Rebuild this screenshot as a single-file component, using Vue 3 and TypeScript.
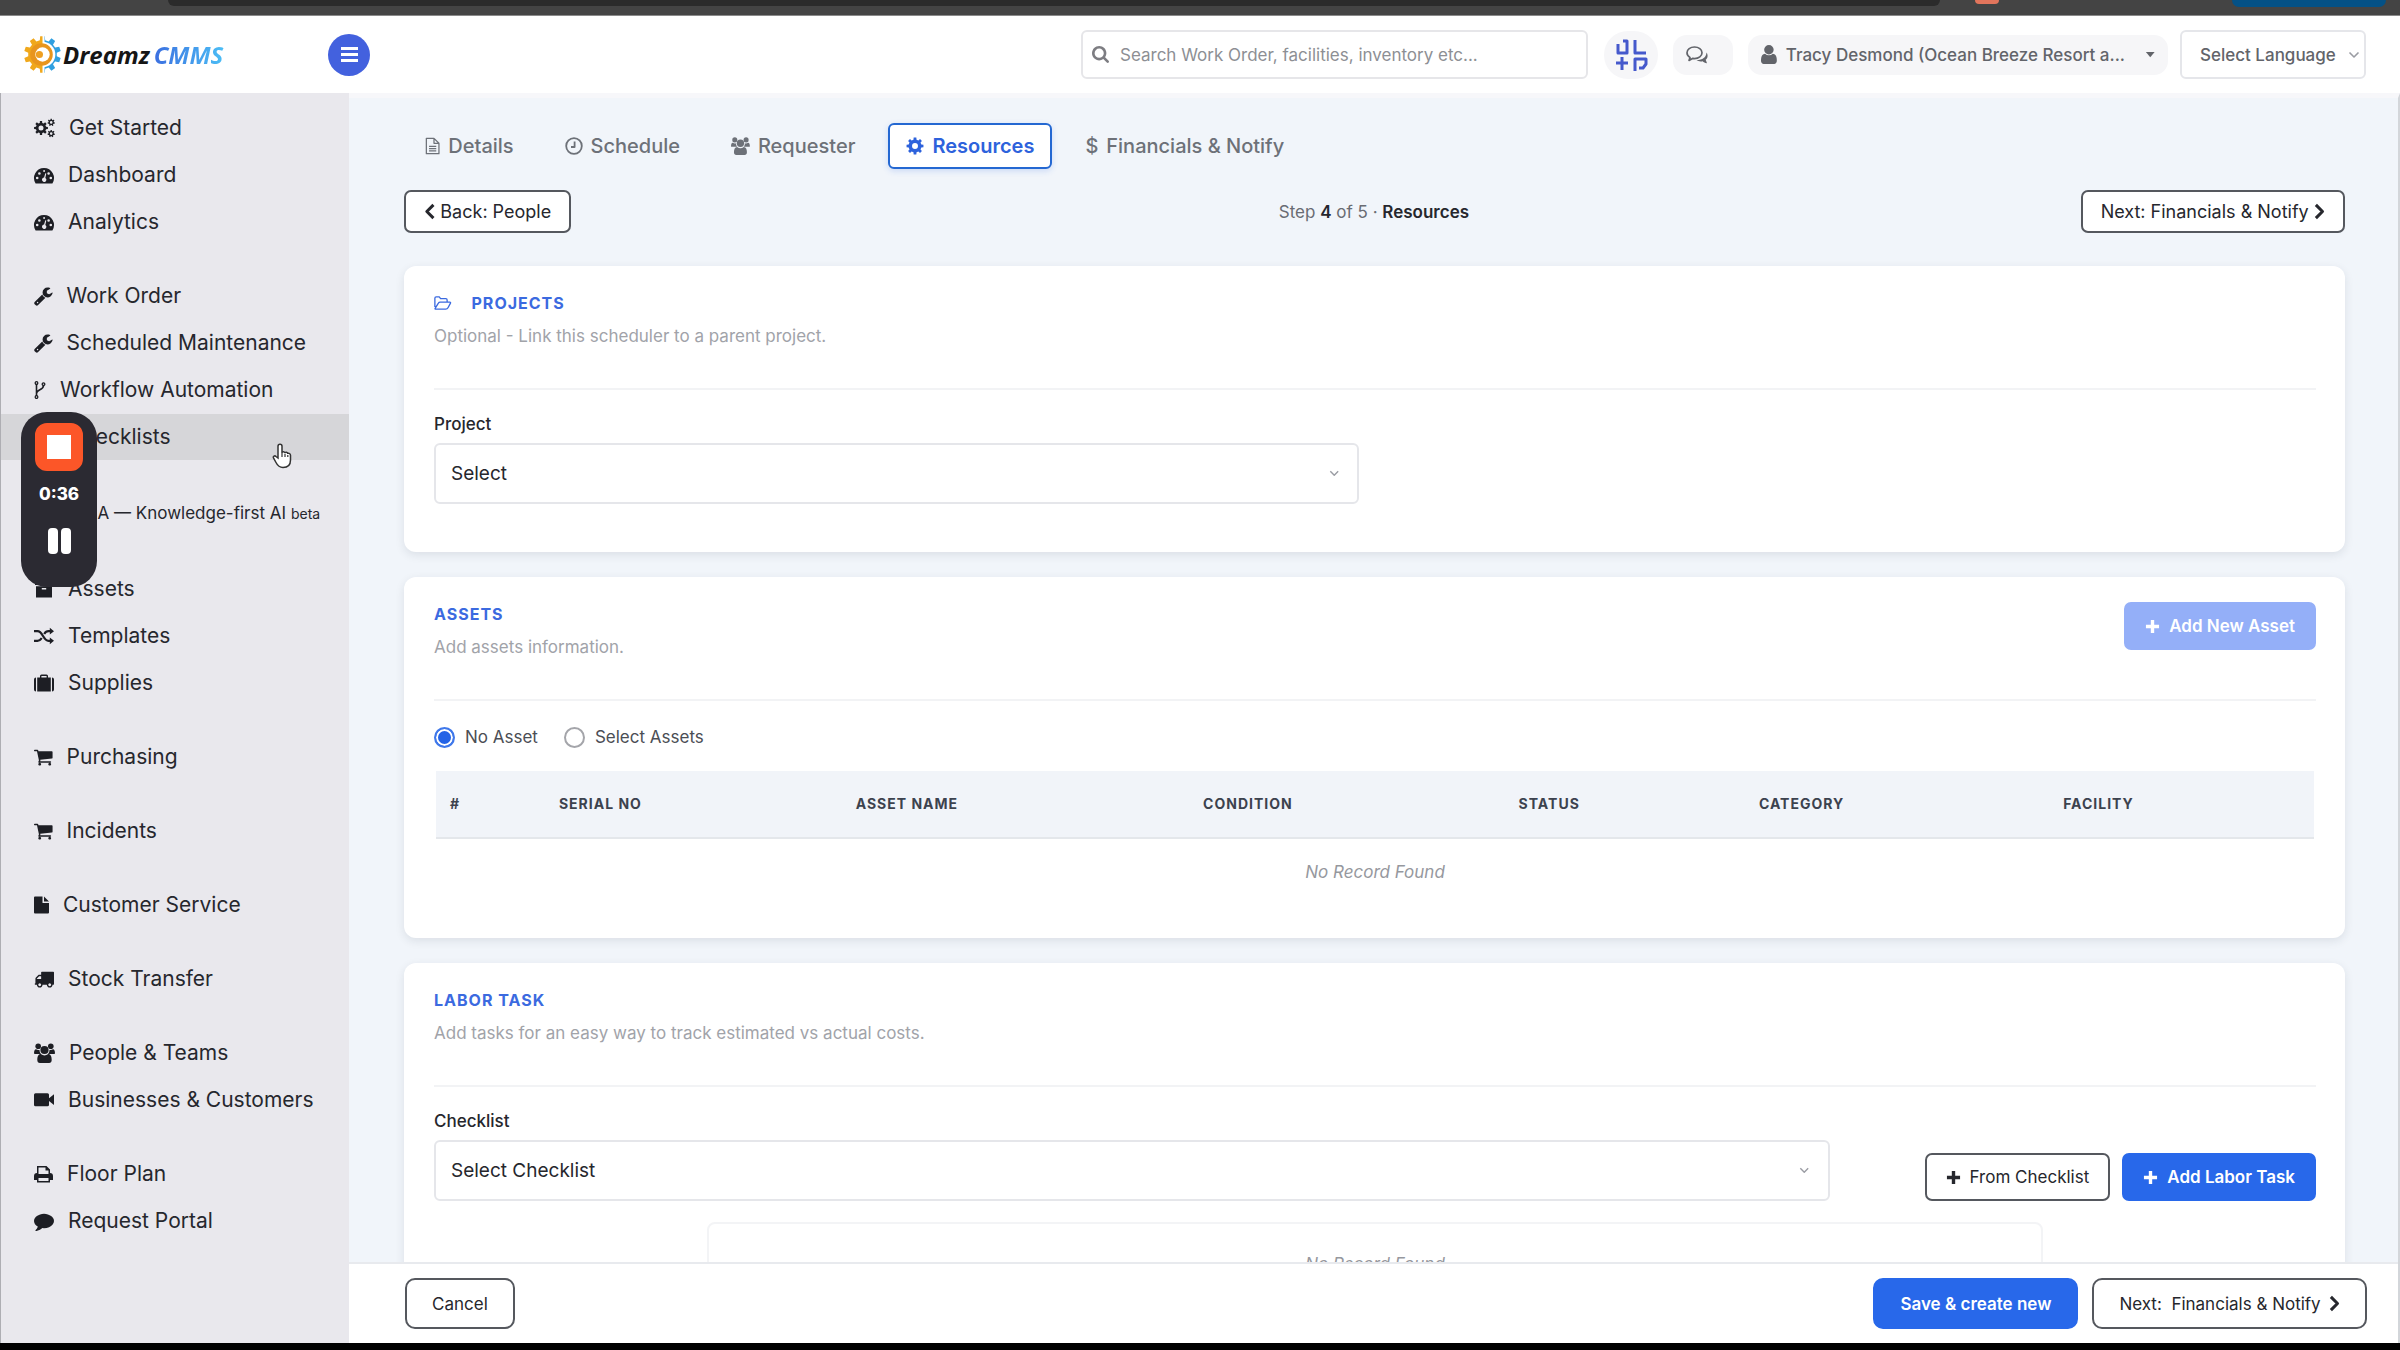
<script setup lang="ts">
import { h, ref } from 'vue'

type IconDef = [box: string, body: string]

/** Outline of a toothed wheel with a round hole in the middle. */
function gear(cx: number, cy: number, outer: number, inner: number, teeth: number, hole: number): string {
  const points: string[] = []
  const step = (Math.PI * 2) / teeth
  for (let i = 0; i < teeth; i++) {
    const a = i * step - Math.PI / 2
    const corners: [number, number][] = [
      [a - step * 0.3, inner],
      [a - step * 0.2, outer],
      [a + step * 0.2, outer],
      [a + step * 0.3, inner],
    ]
    for (const [t, r] of corners) {
      points.push(`${(cx + r * Math.cos(t)).toFixed(2)} ${(cy + r * Math.sin(t)).toFixed(2)}`)
    }
  }
  const ring = hole
    ? `M${cx - hole} ${cy}a${hole} ${hole} 0 1 0 ${hole * 2} 0a${hole} ${hole} 0 1 0 ${-hole * 2} 0z`
    : ''
  return `M${points.join('L')}z${ring}`
}

const p = (d: string) => `<path fill-rule="evenodd" d="${d}"/>`
const line = (d: string, w: number) =>
  `<path fill="none" stroke="currentColor" stroke-width="${w}" stroke-linejoin="round" d="${d}"/>`

const icons: Record<string, IconDef> = {
  cogs: ['0 0 21 20', p(gear(7, 10, 7, 5.2, 8, 2.5)) + p(gear(17.2, 4.4, 3.7, 2.7, 7, 1.3)) + p(gear(17.2, 15.6, 3.7, 2.7, 7, 1.3))],
  gauge: ['0 0 20 20', p('M10 3A10 10 0 0 0 1.6 18.4H18.4A10 10 0 0 0 10 3zM3.2 11.7a1.3 1.3 0 1 1 0 2.6a1.3 1.3 0 1 1 0-2.6zM5.4 7.2a1.3 1.3 0 1 1 0 2.6a1.3 1.3 0 1 1 0-2.6zM14.6 7.2a1.3 1.3 0 1 1 0 2.6a1.3 1.3 0 1 1 0-2.6zM16.8 11.7a1.3 1.3 0 1 1 0 2.6a1.3 1.3 0 1 1 0-2.6zM9.4 5h1.4v2h-1.4zM11.3 8.2l1 .3-1 4.4a2.2 2.2 0 1 1-1.2-.3z')],
  wrench: ['64 0 1664 1792', p('M448 1472q0-26-19-45t-45-19-45 19-19 45 19 45 45 19 45-19 19-45zm644-420l-682 682q-37 37-90 37-52 0-91-37l-106-108q-38-36-38-90 0-53 38-91l681-681q39 98 114.5 173.5t173.5 114.5zm634-435q0 39-23 106-47 134-164.5 217.5t-258.5 83.5q-185 0-316.5-131.5t-131.5-316.5 131.5-316.5 316.5-131.5q58 0 121.5 16.5t107.5 46.5q16 11 16 28t-16 28l-293 169v224l193 107q5-3 79-48.5t135.5-81 70.5-35.5q15 0 23.5 10t8.5 25z')],
  fork: ['0 0 12 20', line('M2.5 4v12M9.5 5.5c0 5-7 3.500-7 8', 1.6) + line('M2.500 1.700a1.300 1.300 0 1 1 0 2.600a1.300 1.300 0 1 1 0-2.600zM2.500 15.700a1.300 1.300 0 1 1 0 2.600a1.300 1.300 0 1 1 0-2.600zM9.500 2.900a1.300 1.300 0 1 1 0 2.600a1.300 1.300 0 1 1 0-2.600z', 1.300)],
  check: ['0 0 20 20', line('M16 11v4a2 2 0 0 1-2 2H4a2 2 0 0 1-2-2V5a2 2 0 0 1 2-2h10M6 9l3.500 3.500L18 4', 2)],
  spark: ['0 0 34 20', p('M16 2l2 6 6 2-6 2-2 6-2-6-6-2 6-2z')],
  archive: ['0 0 20 20', p('M1 2h18v4H1zM2 7.200h16V18.500H2zM7.800 9v1.600h4.400V9z')],
  random: ['0 0 20 20', line('M0 5.200h3.500c5.500 0 5.500 9.600 11 9.600h2M0 14.800h3.500c2 0 3.200-1.200 4.200-2.800M10.200 8c1-1.600 2.300-2.800 4.300-2.800h2', 2.200) + p('M15.800 1.800L20 5.200l-4.200 3.400zM15.800 11.400l4.200 3.400-4.200 3.400z')],
  suitcase: ['0 0 20 20', p('M0 6.500a2 2 0 0 1 2-2v14a2 2 0 0 1-2-2zM3.200 4.500H6V3a1.500 1.500 0 0 1 1.500-1.500h5A1.500 1.500 0 0 1 14 3v1.500h2.800v14H3.200zM7.400 4.500h5.200V3H7.400zM18 4.500a2 2 0 0 1 2 2v10a2 2 0 0 1-2 2z')],
  cart: ['64 0 1664 1792', p('M704 1536q0 52-38 90t-90 38-90-38-38-90 38-90 90-38 90 38 38 90zm896 0q0 52-38 90t-90 38-90-38-38-90 38-90 90-38 90 38 38 90zm128-1088v512q0 24-16.5 42.5t-40.5 21.5l-1044 122q13 60 13 70 0 16-24 64h920q26 0 45 19t19 45-19 45-45 19h-1024q-26 0-45-19t-19-45q0-11 8-31.5t16-36 21.500-40 15.500-29.500l-177-823h-204q-26 0-45-19t-19-45 19-45 45-19h256q16 0 28.500 6.500t19.500 15.500 13 24.500 8 26 5.500 29.500 4.500 26h1201q26 0 45 19t19 45z')],
  file: ['0 0 15 20', p('M1 1.500h7.500v6.500H15v9.500a1 1 0 0 1-1 1H1a1 1 0 0 1-1-1v-15a1 1 0 0 1 1-1zM10 1.500l5 5h-5z')],
  truck: ['0 0 1792 1792', p('M640 1408q0-52-38-90t-90-38-90 38-38 90 38 90 90 38 90-38 38-90zm-384-512h384v-256h-158q-13 0-22 9l-195 195q-9 9-9 22v30zm1280 512q0-52-38-90t-90-38-90 38-38 90 38 90 90 38 90-38 38-90zm256-1088v1024q0 15-4 26.500t-13.500 18.500-16.500 11.500-23.500 6-22.500 2-25.500 0-22.500-.5q0 106-75 181t-181 75-181-75-75-181h-384q0 106-75 181t-181 75-181-75-75-181h-64q-3 0-22.500.5t-25.500 0-22.500-2-23.500-6-16.500-11.500-13.500-18.500-4-26.500q0-26 19-45t45-19v-320q0-8-.5-35t0-38 2.500-34.500 6.500-37 14-30.500 22.500-30l198-198q19-19 50.500-32t58.500-13h160v-192q0-26 19-45t45-19h1024q26 0 45 19t19 45z')],
  users: ['0 0 21 20', '<circle cx="4.200" cy="3.200" r="2.800"/><circle cx="16.800" cy="3.200" r="2.800"/><circle cx="10.500" cy="7" r="4.100"/>' + p('M0 10.500C0 8 .6 6.300 2 6.300c1.200.8 2.400 1 3.500.6c0 1.800.6 3 1.600 4H2C.8 11 0 10.800 0 10.500zM21 10.500c0-2.500-.6-4.200-2-4.200c-1.200.8-2.400 1-3.500.6c0 1.800-.6 3-1.600 4H19c1.200.1 2-.1 2-.4zM3.300 17c0-3.600 1-6 3.500-6c2.300 1.900 5.100 1.900 7.400 0c2.500 0 3.500 2.400 3.500 6c0 2-1 2.900-2.600 2.900H5.900C4.300 19.900 3.300 19 3.300 17z')],
  video: ['0 0 20 20', p('M1.500 3.300h12A1.500 1.500 0 0 1 15 4.800v3.500L20 4.200v10.900l-5-4.100v3.700a1.500 1.500 0 0 1-1.500 1.500h-12A1.500 1.500 0 0 1 0 14.700V4.800A1.500 1.500 0 0 1 1.500 3.300z')],
  print: ['0 0 19 20', p('M3 2h9.500L16 5.500V9a3 3 0 0 1 3 3v4h-3v2.500H3V16H0v-4a3 3 0 0 1 3-3zM4.500 3.500V10h10V6.500h-3v-3zM4.500 14v3h10v-3z')],
  comment: ['0 0 1792 1792', p('M1792 896q0 174-120 321.500t-326 233-450 85.500q-70 0-145-8-198 175-460 242-49 14-114 22-17 2-30.500-9t-17.500-29v-1q-3-4-.5-12t2-10 4.500-9.500l6-9 7-8.500 8-9q7-8 31-34.500t34.500-38 31-39.500 32.500-51 27-59 26-76q-157-89-247.500-220t-90.500-281q0-130 71-248.500t191-204.500 286-136.500 348-50.500 348 50.500 286 136.500 191 204.500 71 248.500z')],
  search: ['64 128 1664 1664', p('M1216 832q0-185-131.500-316.500t-316.500-131.500-316.500 131.500-131.500 316.500 131.500 316.500 316.500 131.500 316.500-131.500 131.500-316.500zm512 832q0 52-38 90t-90 38q-54 0-90-38l-343-342q-179 124-399 124-143 0-273.500-55.500t-225-150-150-225-55.500-273.500 55.500-273.500 150-225 225-150 273.500-55.500 273.500 55.500 225 150 150 225 55.500 273.500q0 220-124 399l343 343q37 37 37 90z')],
  user: ['256 128 1280 1536', p('M1536 1399q0 109-62.500 187t-150.500 78h-854q-88 0-150.500-78t-62.500-187q0-85 8.500-160.500t31.500-152 58.500-131 94-89 134.500-34.500q131 128 313 128t313-128q76 0 134.500 34.500t94 89 58.500 131 31.500 152 8.500 160.500zm-256-887q0 159-112.500 271.500t-271.500 112.500-271.500-112.500-112.500-271.500 112.500-271.500 271.500-112.500 271.500 112.500 112.500 271.500z')],
  chats: ['0 0 22 20', p('M20.500 7.500c2 3 1 6-.8 7.300l1.300 3.400c-2 0-3.400-.8-4.300-1.900c-2.700.5-4.700 0-6.200-1.200c6 0 10-3.100 10-7.600z') + line('M8.500 2c4.200 0 7.500 2.500 7.500 5.800s-3.300 5.800-7.500 5.800c-.8 0-1.500 0-2-.2L3 15.400l1-3C2 11.300 1 9.700 1 7.800C1 4.500 4.300 2 8.500 2z', 1.700)],
  details: ['0 0 17 20', line('M1.500 1.500h8.500l5.500 5.500v11.500h-14zM10 1.500v5.500h5.500M4.500 10.500h8M4.500 13h8M4.500 15.500h8', 1.400)],
  clock: ['0 0 18 18', line('M9 1.200a7.800 7.800 0 1 1 0 15.600a7.800 7.800 0 1 1 0-15.600zM9.600 4.500V10H6', 1.800)],
  cog: ['0 0 20 20', p(gear(10, 10, 9.500, 7.200, 8, 3.300))],
  folder: ['0 0 20 16', line('M1 12.500V2.500A1.500 1.500 0 0 1 2.500 1H6l1.500 2h6A1.500 1.500 0 0 1 15 4.500V7M1.300 14.200L5 8.200Q5.700 7 7 7h11q1.500 0 .7 1.400L16 13.500Q15.200 15 13.500 15H2.500Q.5 15 1.300 14.200z', 1.500)],
  plus: ['0 0 16 16', p('M6.200 1h3.600v5.200H15v3.600H9.800V15H6.200V9.800H1V6.200h5.200z')],
  left: ['0 0 12 18', line('M10 2L3 9l7 7', 3.200)],
  right: ['0 0 12 18', line('M2 2l7 7-7 7', 3.200)],
  down: ['0 0 12 8', line('M1.500 1.500L6 6l4.500-4.500', 1.600)],
  caret: ['0 0 12 8', p('M1 1h10L6 7z')],
  scan: ['0 0 32 32', line('M3 5v9h9V2H8M20 1v13h11M20 8V2M7 18v13M1 24h12M20 32V20h11v5l-3 4h-4', 3)],
}

/** Glyph that scales with the font size of its parent. */
const Icon = (props: { name: string }) => {
  const [box, body] = icons[props.name]
  const [, , w, ht] = box.split(' ').map(Number)
  return h('svg', {
    class: 'icon',
    viewBox: box,
    fill: 'currentColor',
    'aria-hidden': 'true',
    style: { width: `${w / ht}em` },
    innerHTML: body,
  })
}
Icon.props = ['name']

interface NavItem {
  label: string
  icon: string
  hover?: boolean
  small?: string
}

const nav: NavItem[][] = [
  [
    { label: 'Get Started', icon: 'cogs' },
    { label: 'Dashboard', icon: 'gauge' },
    { label: 'Analytics', icon: 'gauge' },
  ],
  [
    { label: 'Work Order', icon: 'wrench' },
    { label: 'Scheduled Maintenance', icon: 'wrench' },
    { label: 'Workflow Automation', icon: 'fork' },
    { label: 'Checklists', icon: 'check', hover: true },
  ],
  [{ label: 'TIA — Knowledge-first AI', icon: 'spark', small: 'beta' }],
  [
    { label: 'Assets', icon: 'archive' },
    { label: 'Templates', icon: 'random' },
    { label: 'Supplies', icon: 'suitcase' },
  ],
  [{ label: 'Purchasing', icon: 'cart' }],
  [{ label: 'Incidents', icon: 'cart' }],
  [{ label: 'Customer Service', icon: 'file' }],
  [{ label: 'Stock Transfer', icon: 'truck' }],
  [
    { label: 'People & Teams', icon: 'users' },
    { label: 'Businesses & Customers', icon: 'video' },
  ],
  [
    { label: 'Floor Plan', icon: 'print' },
    { label: 'Request Portal', icon: 'comment' },
  ],
]

const tabs = [
  { label: 'Details', icon: 'details' },
  { label: 'Schedule', icon: 'clock' },
  { label: 'Requester', icon: 'users' },
  { label: 'Resources', icon: 'cog' },
  { label: 'Financials & Notify', icon: '' },
]
const activeTab = ref('Resources')

const columns = ['#', 'Serial No', 'Asset Name', 'Condition', 'Status', 'Category', 'Facility']
const assetMode = ref('none')
</script>

<template>
  <div class="app">
    <div class="browser">
      <span class="address"></span>
      <span class="extension"></span>
      <span class="update"></span>
    </div>

    <header class="top">
      <a class="brand" href="#">
        <svg class="brand-mark" viewBox="0 0 36 36" aria-hidden="true">
          <defs>
            <clipPath id="half-left"><rect width="18" height="36" /></clipPath>
            <clipPath id="half-right"><rect x="20" width="16" height="36" /></clipPath>
          </defs>
          <path :d="gear(18, 18, 18, 14, 10, 0)" fill="#2f9fe0" clip-path="url(#half-right)" />
          <circle cx="18" cy="18" r="12.500" fill="#fff" />
          <path :d="gear(18, 18, 18, 14, 10, 0)" fill="#f0a81c" clip-path="url(#half-left)" />
          <circle cx="17" cy="18" r="11" fill="#e8951d" />
          <circle cx="18" cy="18" r="7" fill="#fff" />
          <circle cx="15" cy="18" r="3.500" fill="#ee9f22" />
        </svg>
        <span class="brand-name">Dreamz</span>
        <span class="brand-suffix">CMMS</span>
      </a>
      <button class="menu" type="button" aria-label="Toggle menu"><i></i><i></i><i></i></button>

      <div class="tools">
        <label class="search">
          <Icon name="search" />
          <input type="text" aria-label="Search" placeholder="Search Work Order, facilities, inventory etc..." />
        </label>
        <button class="scan" type="button" aria-label="Scan code"><Icon name="scan" /></button>
        <button class="chat" type="button" aria-label="Messages"><Icon name="chats" /></button>
        <button class="account" type="button">
          <Icon name="user" />
          <span>Tracy Desmond (Ocean Breeze Resort a...</span>
          <Icon name="caret" class="account-caret" />
        </button>
        <div class="pick language">
          <select aria-label="Language">
            <option>Select Language</option>
          </select>
          <Icon name="down" />
        </div>
      </div>
    </header>

    <div class="body">
      <nav class="side">
        <ul v-for="(group, g) in nav" :key="g">
          <li v-for="item in group" :key="item.label">
            <a href="#" :class="{ hover: item.hover, assistant: item.small }">
              <Icon :name="item.icon" />
              <span>{{ item.label }} <small v-if="item.small">{{ item.small }}</small></span>
            </a>
          </li>
        </ul>
      </nav>

      <div class="page">
        <main class="content">
          <div class="tabs" role="tablist">
            <button
              v-for="tab in tabs"
              :key="tab.label"
              type="button"
              role="tab"
              :aria-selected="tab.label === activeTab"
              :class="{ active: tab.label === activeTab }"
              @click="activeTab = tab.label"
            >
              <Icon v-if="tab.icon" :name="tab.icon" />
              <span v-else>$</span>
              {{ tab.label }}
            </button>
          </div>

          <div class="steps">
            <button class="btn outline" type="button"><Icon name="left" />Back: People</button>
            <p>Step <b>4</b> of 5 · <strong>Resources</strong></p>
            <button class="btn outline" type="button">Next: Financials &amp; Notify<Icon name="right" /></button>
          </div>

          <section class="card">
            <header class="card-head">
              <div>
                <h2><Icon name="folder" />Projects</h2>
                <p>Optional - Link this scheduler to a parent project.</p>
              </div>
            </header>
            <div class="field project">
              <label for="project">Project</label>
              <div class="pick">
                <select id="project">
                  <option>Select</option>
                </select>
                <Icon name="down" />
              </div>
            </div>
          </section>

          <section class="card assets">
            <header class="card-head">
              <div>
                <h2>Assets</h2>
                <p>Add assets information.</p>
              </div>
              <button class="btn primary" type="button" disabled><Icon name="plus" />Add New Asset</button>
            </header>
            <div class="modes">
              <label><input v-model="assetMode" type="radio" name="asset" value="none" />No Asset</label>
              <label><input v-model="assetMode" type="radio" name="asset" value="select" />Select Assets</label>
            </div>
            <table>
              <thead>
                <tr>
                  <th v-for="column in columns" :key="column" scope="col">{{ column }}</th>
                </tr>
              </thead>
              <tbody>
                <tr>
                  <td :colspan="columns.length">No Record Found</td>
                </tr>
              </tbody>
            </table>
          </section>

          <section class="card">
            <header class="card-head">
              <div>
                <h2>Labor Task</h2>
                <p>Add tasks for an easy way to track estimated vs actual costs.</p>
              </div>
            </header>
            <div class="labor">
              <div class="field">
                <label for="checklist">Checklist</label>
                <div class="pick">
                  <select id="checklist">
                    <option>Select Checklist</option>
                  </select>
                  <Icon name="down" />
                </div>
              </div>
              <div class="labor-actions">
                <button class="btn outline" type="button"><Icon name="plus" />From Checklist</button>
                <button class="btn primary" type="button"><Icon name="plus" />Add Labor Task</button>
              </div>
            </div>
            <div class="empty">No Record Found</div>
          </section>
        </main>

        <footer class="foot">
          <button class="btn outline" type="button">Cancel</button>
          <button class="btn primary save" type="button">Save &amp; create new</button>
          <button class="btn outline" type="button">Next:&nbsp; Financials &amp; Notify<Icon name="right" /></button>
        </footer>
      </div>
    </div>

    <div class="recorder">
      <button class="stop" type="button" aria-label="Stop recording"></button>
      <time>0:36</time>
      <button class="pause" type="button" aria-label="Pause recording"><i></i><i></i></button>
    </div>

    <svg class="pointer" viewBox="0 0 20 26" aria-hidden="true">
      <path
        d="M6 15V3.200a2 2 0 0 1 4 0V10c0-1.800 3-1.700 3 .3c0-1.500 2.800-1.300 2.800.8c0-1.300 2.700-1 2.700 1.200V17c0 5-3 7.500-7.500 7.500c-4 0-5.500-2-7-5l-2.500-4.600c-.8-1.700 1.300-2.700 2.500-1.400z"
        fill="#fff"
        stroke="#333"
        stroke-width="1.500"
      />
      <path d="M10 10v4M13 11v3M15.800 12v2" stroke="#333" stroke-width="1.200" />
    </svg>
  </div>
</template>

<style>
body {
  margin: 0;
  background: #000;
}
</style>

<style scoped>
.app,
.app * {
  box-sizing: border-box;
}

.app {
  position: relative;
  display: flex;
  flex-direction: column;
  height: 100vh;
  overflow: hidden;
  border-bottom: 7px solid #000;
  background: #f1f5fa;
  color: #26272d;
  font: 17px/24px Inter, "Liberation Sans", sans-serif;
}

.app button,
.app input,
.app select {
  font: inherit;
  color: inherit;
}

.app button {
  cursor: pointer;
}

.icon {
  flex: none;
  height: 1em;
  overflow: visible;
}

.browser {
  display: flex;
  flex: none;
  height: 16px;
  padding: 0 14px 0 168px;
  border-bottom: 1px solid #8a8a8a;
  background: #444;
}

.address {
  flex: 1;
  height: 6px;
  border-radius: 0 0 12px 12px;
  background: #2b2b2b;
}

.extension {
  width: 24px;
  height: 4px;
  margin: 0 233px 0 35px;
  border-radius: 0 0 4px 4px;
  background: #e2755c;
}

.update {
  width: 154px;
  height: 7px;
  border-radius: 0 0 10px 10px;
  background: #045186;
}

.top {
  display: flex;
  flex: none;
  align-items: center;
  height: 77px;
  padding: 0 34px 0 24px;
  background: #fff;
}

.brand {
  display: flex;
  align-items: center;
  width: 304px;
  color: #161616;
  font: italic 700 24px/32px "Open Sans", "Noto Sans", sans-serif;
  text-decoration: none;
}

.brand-mark {
  width: 37px;
  height: 37px;
  margin-right: 2px;
}

.brand-suffix {
  margin-left: 4px;
  padding-right: 3px;
  background: linear-gradient(90deg, #3b6fe0, #4cc0f6);
  background-clip: text;
  color: transparent;
}

.menu {
  display: flex;
  flex-direction: column;
  align-items: center;
  justify-content: center;
  gap: 3px;
  width: 42px;
  height: 42px;
  padding: 0;
  border: 0;
  border-radius: 50%;
  background: #4361de;
}

.menu i {
  width: 17px;
  height: 3px;
  background: #fff;
}

.tools {
  display: flex;
  align-items: center;
  margin-left: auto;
  color: #62646a;
}

.search {
  display: flex;
  align-items: center;
  gap: 11px;
  width: 507px;
  height: 49px;
  padding: 0 9px;
  border: 2px solid #e6e6e9;
  border-radius: 6px;
  color: #7d7d82;
}

.search input {
  flex: 1;
  min-width: 0;
  padding: 0;
  border: 0;
  outline: 0;
  background: none;
}

.search input::placeholder {
  color: #8d8f94;
  opacity: 1;
}

.scan,
.chat,
.account {
  display: flex;
  align-items: center;
  justify-content: center;
  height: 40px;
  padding: 0;
  border: 0;
  border-radius: 14px;
  background: #f6f6f8;
}

.scan {
  width: 54px;
  height: 48px;
  margin: 0 15px 0 16px;
  border-radius: 24px;
}

.app .scan {
  color: #4559cc;
  font-size: 32px;
}

.chat {
  width: 60px;
  margin-right: 15px;
  padding-right: 12px;
}

.app .chat {
  font-size: 20px;
}

.account {
  width: 420px;
  margin-right: 12px;
  padding: 0 13px;
}

.account .icon {
  font-size: 19px;
}

.account span {
  flex: 1;
  margin-left: 9px;
  font-weight: 500;
  text-align: left;
}

.account .account-caret {
  font-size: 7px;
}

.pick {
  display: grid;
  align-items: center;
}

.pick select,
.pick .icon {
  grid-area: 1 / 1;
}

.pick select {
  width: 100%;
  height: 61px;
  padding: 0 40px 0 15px;
  border: 2px solid #e5e6ea;
  border-radius: 6px;
  appearance: none;
  background: #fff;
  font-size: 19px;
}

.pick .icon {
  justify-self: end;
  margin-right: 20px;
  color: #9a9ca3;
  font-size: 7px;
  pointer-events: none;
}

.language select {
  width: 186px;
  height: 49px;
  padding: 0 0 0 18px;
  font-size: 17px;
  font-weight: 500;
}

.language .icon {
  margin-right: 6px;
  font-size: 8px;
}

.body {
  display: flex;
  flex: 1;
  min-height: 0;
}

.side {
  display: flex;
  flex: none;
  flex-direction: column;
  gap: 27px;
  width: 349px;
  padding-top: 12px;
  border-left: 1px solid #aeaeb3;
  background: #e9e8ed;
}

.side ul {
  margin: 0;
  padding: 0;
  list-style: none;
}

.side a {
  display: flex;
  align-items: center;
  gap: 14px;
  height: 46px;
  margin-bottom: 1px;
  padding-left: 33px;
  color: #26272d;
  font-size: 21px;
  text-decoration: none;
  white-space: nowrap;
}

.side .icon {
  color: #1d1e24;
  font-size: 20px;
}

.side .hover {
  background: #d6d6d9;
}

.side .assistant {
  height: 50px;
  font-size: 17px;
}

.side small {
  font-size: 14px;
}

.page {
  display: flex;
  flex: 1;
  flex-direction: column;
  min-width: 0;
  border-top: 5px solid #f7f7fa;
  border-right: 2px solid #d3d6da;
}

.content {
  flex: 1;
  min-height: 0;
  padding: 25px 53px 0 55px;
  overflow: hidden;
}

.tabs {
  display: flex;
  gap: 15px;
  padding-left: 3px;
}

.tabs button {
  display: flex;
  align-items: center;
  gap: 8px;
  height: 46px;
  padding: 0 16px;
  border: 2px solid transparent;
  border-radius: 6px;
  background: none;
  color: #6d7178;
  font-size: 20px;
  font-weight: 500;
}

.tabs .icon {
  font-size: 18px;
}

.tabs .active {
  border-color: #2468d2;
  background: #fff;
  box-shadow: 0 2px 6px #2563eb30;
  color: #2d62dc;
  font-weight: 600;
}

.steps {
  display: flex;
  align-items: center;
  justify-content: space-between;
  margin: 21px 0 33px;
}

.steps p {
  margin: 0 0 0 96px;
  color: #696c73;
}

.steps b,
.steps strong {
  color: #26272d;
  font-weight: 600;
}

.btn {
  display: flex;
  align-items: center;
  gap: 8px;
  height: 48px;
  padding: 0 18px;
  border: 2px solid #55585e;
  border-radius: 7px;
  background: #fff;
  font-weight: 500;
  white-space: nowrap;
}

.btn .icon {
  font-size: 15px;
}

.app .steps .btn {
  gap: 5px;
  height: 43px;
  font-size: 18px;
}

.app .primary {
  border-color: #2868ea;
  background: #2868ea;
  color: #fff;
  font-weight: 600;
}

.app .primary:disabled {
  border-color: #94aff8;
  background: #94aff8;
}

.card {
  margin-bottom: 25px;
  padding: 25px 29px 48px 30px;
  border-radius: 12px;
  background: #fff;
  box-shadow: 0 3px 10px #1e293b1a;
}

.assets {
  padding-bottom: 34px;
}

.card-head {
  display: flex;
  align-items: flex-start;
  justify-content: space-between;
  height: 99px;
  border-bottom: 2px solid #f2f3f5;
}

.card-head h2 {
  display: flex;
  align-items: center;
  gap: 20px;
  margin: 0 0 9px;
  color: #3b6ae0;
  font-size: 16px;
  font-weight: 700;
  letter-spacing: 1px;
  line-height: 24px;
  text-transform: uppercase;
}

.card-head h2 .icon {
  font-size: 14px;
}

.card-head p {
  margin: 0;
  color: #a1a3a9;
}

.field label {
  display: block;
  margin: 22px 0 7px;
  font-weight: 500;
}

.project {
  width: calc(50% - 16px);
}

.modes {
  display: flex;
  gap: 26px;
  padding: 24px 0 22px;
  color: #4b4e55;
}

.modes label {
  display: flex;
  align-items: center;
  gap: 10px;
}

.modes input {
  width: 21px;
  height: 21px;
  margin: 0;
  border: 2px solid #a4a5aa;
  border-radius: 50%;
  appearance: none;
  background: #fff;
}

.modes input:checked {
  border-color: #3f78ea;
  background: #2463e6;
  box-shadow: inset 0 0 0 2px #fff;
}

table {
  width: calc(100% - 4px);
  margin: 0 2px;
  border-collapse: collapse;
  table-layout: fixed;
}

th {
  height: 67px;
  padding: 0 14px;
  border-bottom: 2px solid #e4e7eb;
  background: #f1f4f9;
  color: #3c424e;
  font-size: 14px;
  font-weight: 700;
  letter-spacing: 1px;
  text-align: left;
  text-transform: uppercase;
}

th:nth-child(1) {
  width: 5.8%;
}

th:nth-child(2) {
  width: 15.8%;
}

th:nth-child(3) {
  width: 18.5%;
}

th:nth-child(4) {
  width: 16.8%;
}

th:nth-child(5) {
  width: 12.8%;
}

th:nth-child(6) {
  width: 16.2%;
}

td {
  height: 66px;
  padding: 0;
  color: #96989e;
  font-style: italic;
  text-align: center;
}

.labor {
  display: flex;
  align-items: flex-end;
  justify-content: space-between;
}

.labor .field {
  width: calc(75% - 16px);
}

.labor-actions {
  display: flex;
  gap: 12px;
}

.empty {
  width: 71%;
  height: 200px;
  margin: 21px auto 0;
  padding-top: 28px;
  border: 2px solid #f3f4f6;
  border-radius: 8px;
  color: #96989e;
  font-style: italic;
  text-align: center;
}

.labor-actions .btn,
.card-head .btn {
  gap: 9px;
  padding: 0 19px;
}

.foot {
  display: flex;
  flex: none;
  align-items: center;
  gap: 14px;
  height: 81px;
  padding: 0 31px 0 56px;
  border-top: 2px solid #e8eaee;
  background: #fff;
}

.foot .btn {
  height: 51px;
  padding: 0 25px;
  border-radius: 10px;
}

.foot .save {
  margin-left: auto;
}

.steps .btn .icon,
.foot .btn .icon {
  font-size: 17px;
}

.recorder {
  position: absolute;
  top: 412px;
  left: 21px;
  display: flex;
  flex-direction: column;
  align-items: center;
  width: 76px;
  height: 175px;
  padding-top: 11px;
  border-radius: 26px;
  background: #2b2a32;
  color: #fff;
  font-weight: 800;
}

.recorder button {
  padding: 0;
  border: 0;
  background: none;
}

.recorder .stop {
  width: 48px;
  height: 48px;
  border: 12px solid #fc5628;
  border-radius: 12px;
  background: #fff;
}

.recorder time {
  margin: 11px 0 22px;
}

.pause {
  display: flex;
  gap: 3px;
}

.pause i {
  width: 10px;
  height: 26px;
  border-radius: 4px;
  background: #fff;
}

.pointer {
  position: absolute;
  top: 443px;
  left: 272px;
  width: 20px;
  height: 26px;
}
</style>
